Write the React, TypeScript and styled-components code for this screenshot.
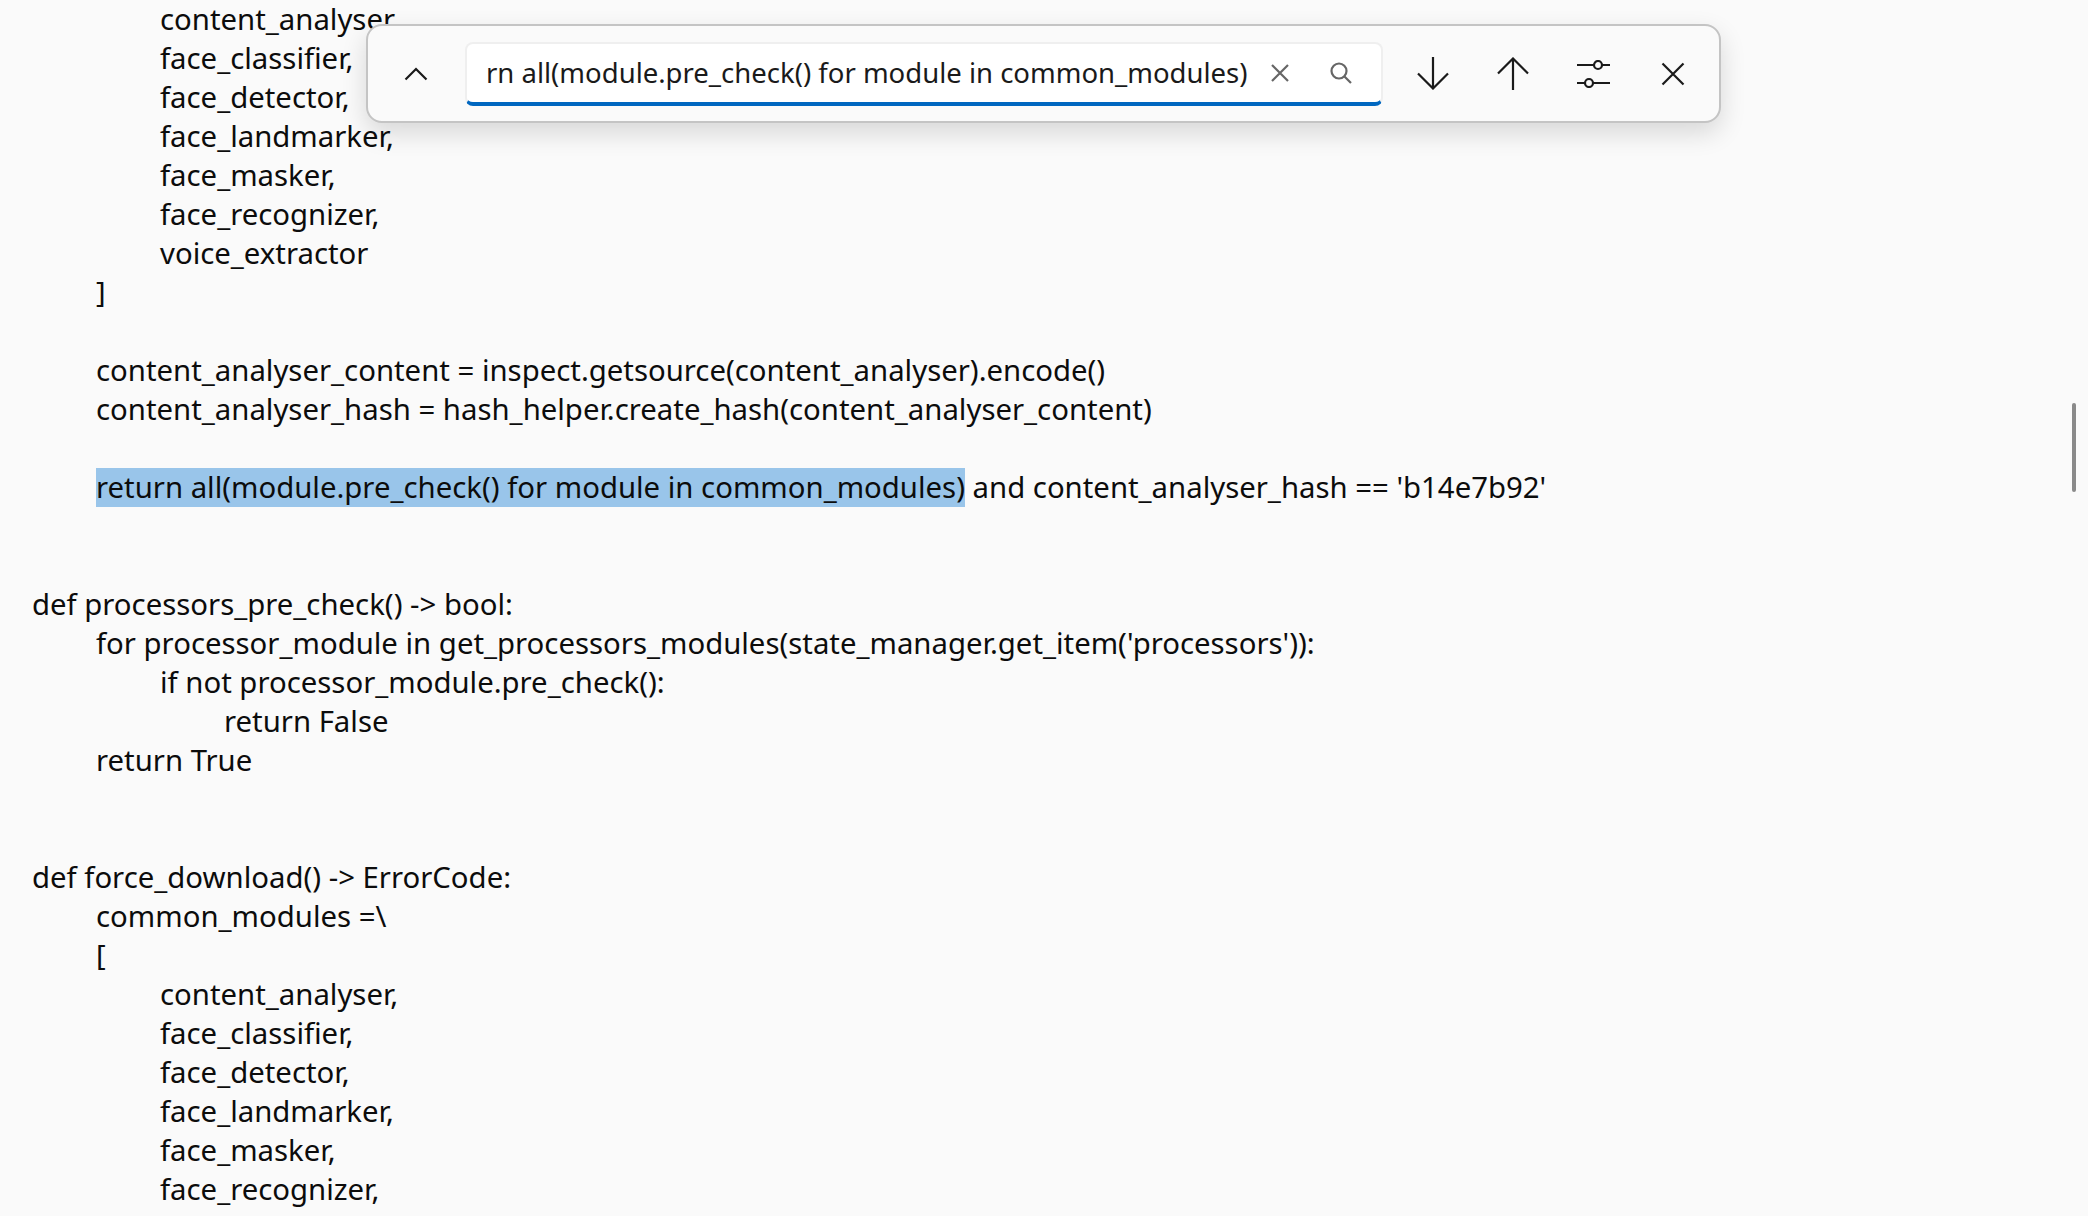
import React from "react";
import styled, { createGlobalStyle } from "styled-components";

const Global = createGlobalStyle`
  html, body { margin: 0; height: 100%; background: #fafafa; overflow: hidden; }
  #root { height: 100%; }
`;

const Page = styled.div`
  position: relative;
  width: 2088px;
  height: 1216px;
  overflow: hidden;
  background: #fafafa;
  font-family: "Noto Sans", "Open Sans", sans-serif;
  color: #0c0c0c;
`;

const Editor = styled.div`
  display: flex;
  flex-direction: column;
  padding-left: 32px;
`;

const Line = styled.div<{ $level: number }>`
  height: 39px;
  line-height: 39px;
  font-size: 29.33px;
  white-space: pre;
  padding-left: ${(p) => p.$level * 64}px;
`;

const Highlight = styled.span`
  background: #99c5ea;
  display: inline-block;
`;

const FindBar = styled.div`
  position: absolute;
  left: 366px;
  top: 24px;
  width: 1355px;
  height: 99px;
  box-sizing: border-box;
  display: flex;
  align-items: center;
  padding: 0 8px 0 8px;
  background: #fafafa;
  border: 2px solid #c4c4c4;
  border-radius: 16px;
  box-shadow: 0 10px 26px rgba(0, 0, 0, 0.14);
`;

const BarButton = styled.div`
  width: 80px;
  height: 60px;
  flex: none;
  display: flex;
  align-items: center;
  justify-content: center;
  color: #1a1a1a;
`;

const SearchBox = styled.div`
  flex: none;
  width: 918px;
  height: 64px;
  margin: 0 10px 0 9px;
  box-sizing: border-box;
  display: flex;
  align-items: center;
  padding: 0 10px 0 19px;
  background: #ffffff;
  border: 2px solid #efefef;
  border-bottom: 4px solid #0067c0;
  border-radius: 8px;
`;

const SearchText = styled.div`
  flex: 1;
  min-width: 0;
  overflow: hidden;
  white-space: pre;
  font-size: 27.5px;
  color: #1a1a1a;
`;

const BoxIcon = styled.div`
  width: 61px;
  flex: none;
  display: flex;
  align-items: center;
  justify-content: center;
  color: #666666;
`;

const ScrollThumb = styled.div`
  position: absolute;
  left: 2072px;
  top: 403px;
  width: 4px;
  height: 89px;
  border-radius: 2px;
  background: #8a8a8a;
`;

const Icon = styled.svg`
  display: block;
  fill: none;
  stroke: currentColor;
  stroke-width: 2.2;
`;

const lines: [number, string][] = [
  [2, "content_analyser,"],
  [2, "face_classifier,"],
  [2, "face_detector,"],
  [2, "face_landmarker,"],
  [2, "face_masker,"],
  [2, "face_recognizer,"],
  [2, "voice_extractor"],
  [1, "]"],
  [0, ""],
  [1, "content_analyser_content = inspect.getsource(content_analyser).encode()"],
  [1, "content_analyser_hash = hash_helper.create_hash(content_analyser_content)"],
  [0, ""],
  [1, "@@"],
  [0, ""],
  [0, ""],
  [0, "def processors_pre_check() -> bool:"],
  [1, "for processor_module in get_processors_modules(state_manager.get_item('processors')):"],
  [2, "if not processor_module.pre_check():"],
  [3, "return False"],
  [1, "return True"],
  [0, ""],
  [0, ""],
  [0, "def force_download() -> ErrorCode:"],
  [1, "common_modules =\\"],
  [1, "["],
  [2, "content_analyser,"],
  [2, "face_classifier,"],
  [2, "face_detector,"],
  [2, "face_landmarker,"],
  [2, "face_masker,"],
  [2, "face_recognizer,"],
  [2, "voice_extractor"],
];

export default function App() {
  return (
    <Page>
      <Global />
      <Editor>
        {lines.map(([level, text], i) => (
          <Line key={i} $level={level}>
            {text === "@@" ? (
              <>
                <Highlight>return all(module.pre_check() for module in common_modules)</Highlight>
                {" and content_analyser_hash == 'b14e7b92'"}
              </>
            ) : (
              text
            )}
          </Line>
        ))}
      </Editor>
      <ScrollThumb />
      <FindBar>
        <BarButton>
          <Icon width="24" height="14" viewBox="0 0 24 14"><path d="M1.5 12.5 12 2l10.5 10.5" /></Icon>
        </BarButton>
        <SearchBox>
          <SearchText>rn all(module.pre_check() for module in common_modules)</SearchText>
          <BoxIcon>
            <Icon width="18" height="18" viewBox="0 0 18 18"><path d="M1 1l16 16M17 1 1 17" /></Icon>
          </BoxIcon>
          <BoxIcon>
            <Icon width="22" height="22" viewBox="0 0 22 22"><circle cx="9" cy="9" r="7.5" /><path d="M14.5 14.5 21 21" /></Icon>
          </BoxIcon>
        </SearchBox>
        <BarButton>
          <Icon width="32" height="33" viewBox="0 0 32 33"><path d="M16 0v31M1 16.5 16 31.5 31 16.5" /></Icon>
        </BarButton>
        <BarButton>
          <Icon width="32" height="33" viewBox="0 0 32 33"><path d="M16 33V2M1 16.5 16 1.5 31 16.5" /></Icon>
        </BarButton>
        <BarButton>
          <Icon width="33" height="28" viewBox="0 0 33 28"><path d="M0 5h17M25 5h8M0 23h8M16 23h17" /><circle cx="21" cy="5" r="4" /><circle cx="12" cy="23" r="4" /></Icon>
        </BarButton>
        <BarButton>
          <Icon width="24" height="24" viewBox="0 0 24 24"><path d="M1.5 1.5l21 21M22.5 1.5l-21 21" /></Icon>
        </BarButton>
      </FindBar>
    </Page>
  );
}
